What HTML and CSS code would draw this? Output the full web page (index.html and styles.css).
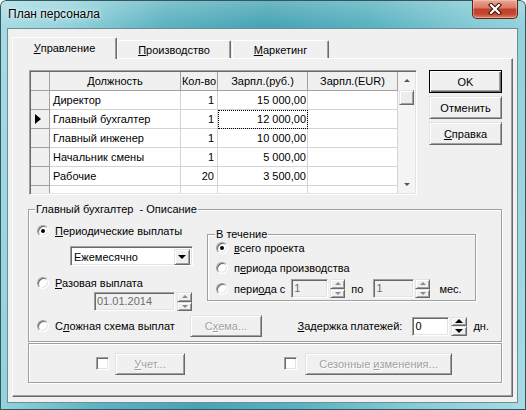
FILE: index.html
```html
<!DOCTYPE html>
<html lang="ru">
<head>
    <meta charset="UTF-8">
    <title>План персонала</title>
    <link rel="stylesheet" href="styles.css">
</head>
<body>
    <div class="window">
        <div class="titlebar">
            <span class="title">План персонала</span>
            <span class="close">
                <svg width="14" height="12" viewBox="0 0 14 12">
                    <path d="M3 2 L11 10 M11 2 L3 10" stroke="#3a130c" stroke-width="4.2" stroke-linecap="square"/>
                    <path d="M3 2 L11 10 M11 2 L3 10" stroke="#fff" stroke-width="2.2" stroke-linecap="square"/>
                </svg>
            </span>
        </div>

        <div class="client">
            <div class="tabs">
                <div class="tab active"><u>У</u>правление</div>
                <div class="tab prod"><u>П</u>роизводство</div>
                <div class="tab mark"><u>М</u>аркетинг</div>
            </div>

            <div class="panel">
                <div class="top">
                    <div class="grid">
                        <div class="grid-body">
                            <div class="row head">
                                <div class="c ind"></div>
                                <div class="c name">Должность</div>
                                <div class="c qty">Кол-во</div>
                                <div class="c rub">Зарпл.(руб.)</div>
                                <div class="c eur">Зарпл.(EUR)</div>
                            </div>
                            <div class="row">
                                <div class="c ind"></div>
                                <div class="c name">Директор</div>
                                <div class="c qty">1</div>
                                <div class="c rub">15 000,00</div>
                                <div class="c eur"></div>
                            </div>
                            <div class="row">
                                <div class="c ind"><span class="pointer"></span></div>
                                <div class="c name">Главный бухгалтер</div>
                                <div class="c qty">1</div>
                                <div class="c rub focus">12 000,00</div>
                                <div class="c eur"></div>
                            </div>
                            <div class="row">
                                <div class="c ind"></div>
                                <div class="c name">Главный инженер</div>
                                <div class="c qty">1</div>
                                <div class="c rub">10 000,00</div>
                                <div class="c eur"></div>
                            </div>
                            <div class="row">
                                <div class="c ind"></div>
                                <div class="c name">Начальник смены</div>
                                <div class="c qty">1</div>
                                <div class="c rub">5 000,00</div>
                                <div class="c eur"></div>
                            </div>
                            <div class="row">
                                <div class="c ind"></div>
                                <div class="c name">Рабочие</div>
                                <div class="c qty">20</div>
                                <div class="c rub">3 500,00</div>
                                <div class="c eur"></div>
                            </div>
                            <div class="row">
                                <div class="c ind"></div>
                                <div class="c name"></div>
                                <div class="c qty"></div>
                                <div class="c rub"></div>
                                <div class="c eur"></div>
                            </div>
                        </div>
                        <div class="vscroll">
                            <div class="sb-btn"><span class="tri up"></span></div>
                            <div class="sb-thumb"></div>
                            <div class="sb-track"></div>
                            <div class="sb-btn"><span class="tri down"></span></div>
                        </div>
                    </div>

                    <div class="cmds">
                        <button class="btn default">OK</button>
                        <button class="btn">Отменить</button>
                        <button class="btn"><u>С</u>правка</button>
                    </div>
                </div>

                <div class="group main">
                    <div class="gtitle">Главный бухгалтер&nbsp; - Описание</div>
                    <div class="main-top">
                        <div class="left-col">
                            <div class="opt first"><span class="radio on"></span><span><u>П</u>ериодические выплаты</span></div>
                            <div class="combo">
                                <span class="combo-text">Ежемесячно</span>
                                <span class="drop raised"><span class="tri down black"></span></span>
                            </div>
                            <div class="opt second"><span class="radio"></span><span><u>Р</u>азовая выплата</span></div>
                            <div class="date">
                                <span class="edit off date-edit">01.01.2014</span>
                                <span class="spin">
                                    <span class="raised"><span class="tri up"></span></span>
                                    <span class="raised"><span class="tri down"></span></span>
                                </span>
                            </div>
                        </div>

                        <div class="group period">
                            <div class="gtitle">В течение</div>
                            <div class="opt line"><span class="radio on"></span><span><u>в</u>сего проекта</span></div>
                            <div class="opt line"><span class="radio"></span><span>п<u>е</u>риода производства</span></div>
                            <div class="opt line last">
                                <span class="radio"></span><span>пери<u>о</u>да с</span>
                                <span class="edit off from">1</span>
                                <span class="spin">
                                    <span class="raised"><span class="tri up"></span></span>
                                    <span class="raised"><span class="tri down"></span></span>
                                </span>
                                <span class="po">по</span>
                                <span class="edit off to">1</span>
                                <span class="spin near">
                                    <span class="raised"><span class="tri up"></span></span>
                                    <span class="raised"><span class="tri down"></span></span>
                                </span>
                                <span class="unit">мес.</span>
                            </div>
                        </div>
                    </div>

                    <div class="bottom-row">
                        <div class="opt scheme-opt"><span class="radio"></span><span>С<u>л</u>ожная схема выплат</span></div>
                        <button class="btn off scheme">С<u>х</u>ема...</button>
                        <div class="delay">
                            <span><u>З</u>адержка платежей:</span>
                            <span class="edit days">0</span>
                            <span class="spin">
                                <span class="raised"><span class="tri up black"></span></span>
                                <span class="raised"><span class="tri down black"></span></span>
                            </span>
                            <span class="unit">дн.</span>
                        </div>
                    </div>
                </div>

                <div class="group extra">
                    <span class="check"></span>
                    <button class="btn off account"><u>У</u>чет...</button>
                    <span class="check second"></span>
                    <button class="btn off season">Сезонные <u>и</u>зменения...</button>
                </div>
            </div>
        </div>
    </div>
</body>
</html>
```

FILE: styles.css
```css
body {
    margin: 0;
    background: #fff;
    font-family: "Liberation Sans", Arial, sans-serif;
    font-size: 11px;
    color: #000;
}
u {
    text-decoration: underline;
    text-underline-offset: 1px;
}

/* window frame */
.window {
    width: 526px;
    height: 410px;
    box-sizing: border-box;
    display: flex;
    flex-direction: column;
    padding: 0 8px 7px 7px;
    border-radius: 6px 6px 0 0;
    box-shadow: inset 0 0 0 1px #36565f;
    background:
        linear-gradient(180deg, rgba(255,255,255,0.22), rgba(255,255,255,0) 26px),
        linear-gradient(100deg, #a9dce4 0%, #93d3dc 12%, #5db3c1 28%, #47a4b4 45%, #58b2c0 62%, #84cad5 80%, #a8dce4 100%);
}
.titlebar {
    height: 28px;
    display: flex;
    justify-content: space-between;
    align-items: flex-start;
}
.title {
    padding: 7px 0 0 1px;
    font-size: 12px;
    line-height: 15px;
    text-shadow: 0 0 6px rgba(255,255,255,0.9), 0 0 2px rgba(255,255,255,0.8);
}
.close {
    width: 46px;
    height: 19px;
    box-sizing: border-box;
    border: 1px solid #5d241a;
    border-top: none;
    border-radius: 0 0 5px 5px;
    background: linear-gradient(#eaa797, #d97b66 42%, #c2402b 52%, #c44530 78%, #dd8266);
    box-shadow: inset 0 0 0 1px rgba(255,210,200,0.45);
    display: flex;
    align-items: center;
    justify-content: center;
}

/* client area */
.client {
    flex: 1;
    display: flex;
    flex-direction: column;
    background: #f0f0f0;
    border: 1px solid #6f8d96;
    padding: 8px 4px 5px 4px;
}
.tabs {
    display: flex;
    align-items: flex-end;
    height: 21px;
}
.tab {
    box-sizing: border-box;
    height: 18px;
    border: 1px solid;
    border-color: #fff #696969 transparent #fff;
    border-bottom: none;
    border-radius: 2px 2px 0 0;
    box-shadow: inset -1px 0 #a0a0a0;
    background: #f0f0f0;
    display: flex;
    align-items: center;
    justify-content: center;
}
.tab.active {
    width: 105px;
    height: 22px;
    margin-bottom: -1px;
    padding-bottom: 1px;
    position: relative;
    z-index: 1;
}
.tab.prod {
    width: 114px;
}
.tab.mark {
    width: 97px;
    margin-left: 1px;
}
.panel {
    flex: 1;
    box-sizing: border-box;
    border: 1px solid;
    border-color: #fff #696969 #696969 #fff;
    box-shadow: inset -1px -1px #a0a0a0;
    padding: 11px 0 0 16px;
    display: flex;
    flex-direction: column;
}

/* grid */
.top {
    display: flex;
    gap: 12px;
    height: 125px;
}
.grid {
    width: 388px;
    height: 125px;
    box-sizing: border-box;
    border: 1px solid;
    border-color: #a0a0a0 #fff #fff #a0a0a0;
    box-shadow: inset 1px 1px #696969, inset -1px -1px #e3e3e3;
    padding: 1px;
    display: flex;
    background: #fff;
}
.grid-body {
    flex: 1;
    overflow: hidden;
}
.row {
    display: flex;
    height: 19px;
}
.c {
    box-sizing: border-box;
    height: 19px;
    border-right: 1px solid #d4d4d4;
    border-bottom: 1px solid #d4d4d4;
    padding: 0 3px;
    line-height: 18px;
    white-space: nowrap;
    overflow: hidden;
}
.ind {
    width: 19px;
    background: #f0f0f0;
    border-color: #a0a0a0;
    display: flex;
    align-items: center;
    padding-left: 4px;
}
.name {
    width: 131px;
}
.qty {
    width: 37px;
    text-align: right;
}
.rub {
    width: 90px;
    text-align: right;
    padding-right: 1px;
}
.eur {
    width: 90px;
}
.head .c {
    background: #f0f0f0;
    border-color: #a0a0a0;
    text-align: center;
    padding: 0;
}
.focus {
    outline: 1px dotted #000;
    outline-offset: -1px;
}
.pointer {
    border-left: 6px solid #000;
    border-top: 5px solid transparent;
    border-bottom: 5px solid transparent;
}
.vscroll {
    width: 17px;
    display: flex;
    flex-direction: column;
    background: #f4f4f4;
}
.sb-btn {
    height: 17px;
    display: flex;
    align-items: center;
    justify-content: center;
}
.sb-thumb {
    height: 15px;
    margin: 1px 1px 0 1px;
    box-sizing: border-box;
    border: 1px solid;
    border-color: #e3e3e3 #696969 #696969 #e3e3e3;
    box-shadow: inset 1px 1px #fff, inset -1px -1px #a0a0a0;
    background: #ececec;
}
.sb-track {
    flex: 1;
}
.tri {
    width: 0;
    height: 0;
    border-left: 3px solid transparent;
    border-right: 3px solid transparent;
}
.tri.up {
    border-bottom: 3px solid #8a8a8a;
}
.tri.down {
    border-top: 3px solid #8a8a8a;
}
.sb-btn .tri.up {
    border-bottom-color: #555;
}
.sb-btn .tri.down {
    border-top-color: #555;
}
.tri.black.up {
    border-bottom: 4px solid #000;
    border-left-width: 4px;
    border-right-width: 4px;
}
.tri.black.down {
    border-top: 4px solid #000;
    border-left-width: 4px;
    border-right-width: 4px;
}

/* buttons */
.cmds {
    display: flex;
    flex-direction: column;
    gap: 3px;
    width: 73px;
}
.btn {
    box-sizing: border-box;
    height: 23px;
    margin: 0;
    padding: 0;
    font: inherit;
    color: #000;
    background: #f0f0f0;
    border: 1px solid;
    border-color: #e3e3e3 #696969 #696969 #e3e3e3;
    box-shadow: inset 1px 1px #fff, inset -1px -1px #a0a0a0;
}
.btn.default {
    border-color: #000;
    box-shadow: inset 1px 1px #fff, inset -1px -1px #696969, inset -2px -2px #a0a0a0;
}
.btn.off {
    color: #a0a0a0;
    text-shadow: 1px 1px 0 #fff;
}
.raised {
    box-sizing: border-box;
    border: 1px solid;
    border-color: #e3e3e3 #696969 #696969 #e3e3e3;
    box-shadow: inset 1px 1px #fff, inset -1px -1px #a0a0a0;
    background: #f0f0f0;
    display: flex;
    align-items: center;
    justify-content: center;
}

/* group boxes */
.group {
    box-sizing: border-box;
    border: 1px solid #a0a0a0;
    box-shadow: inset 1px 1px #fff, 1px 1px #fff;
}
.gtitle {
    width: fit-content;
    height: 13px;
    line-height: 13px;
    margin: -7px 0 0 -2px;
    padding: 0 1px;
    background: #f0f0f0;
}
.main {
    width: 474px;
    height: 133px;
    margin: 14px 0 0 -1px;
    padding: 0 12px 0 8px;
}
.main-top {
    display: flex;
}
.left-col {
    width: 170px;
}
.opt {
    display: flex;
    align-items: center;
    height: 16px;
    white-space: nowrap;
}
.opt.first {
    margin-top: 7px;
}
.opt.second {
    margin-top: 9px;
}
.radio {
    width: 12px;
    height: 12px;
    flex: none;
    box-sizing: border-box;
    margin-right: 6px;
    border-radius: 50%;
    border: 1px solid;
    border-color: #a0a0a0 #fff #fff #a0a0a0;
    box-shadow: inset 1px 1px #696969, inset -1px -1px #e3e3e3;
    background: #fff;
    display: flex;
    align-items: center;
    justify-content: center;
}
.radio.on::after {
    content: "";
    width: 4px;
    height: 4px;
    border-radius: 50%;
    background: #000;
}
.edit {
    box-sizing: border-box;
    height: 19px;
    border: 1px solid;
    border-color: #a0a0a0 #fff #fff #a0a0a0;
    box-shadow: inset 1px 1px #696969, inset -1px -1px #e3e3e3;
    background: #fff;
    padding: 0 2px;
    line-height: 17px;
    white-space: nowrap;
}
.edit.off {
    background: #f0f0f0;
    color: #6d6d6d;
}
.combo {
    display: flex;
    width: 123px;
    height: 20px;
    margin: 7px 0 0 33px;
    box-sizing: border-box;
    border: 1px solid;
    border-color: #a0a0a0 #fff #fff #a0a0a0;
    box-shadow: inset 1px 1px #696969, inset -1px -1px #e3e3e3;
    background: #fff;
    padding: 2px;
}
.combo-text {
    flex: 1;
    padding-left: 1px;
    line-height: 16px;
}
.drop {
    width: 16px;
    height: 16px;
}
.date {
    display: flex;
    margin: 1px 0 0 57px;
}
.date-edit {
    width: 81px;
}
.spin {
    display: flex;
    flex-direction: column;
    width: 15px;
    height: 19px;
    margin-left: 2px;
}
.spin .raised {
    flex: 1;
}
.period {
    width: 269px;
    height: 67px;
    margin-top: 18px;
    padding: 0 0 0 8px;
}
.period .gtitle {
    margin: -7px 0 -3px -1px;
}
.opt.line {
    height: 20px;
}
.opt.last {
    height: 21px;
}
.from {
    width: 37px;
    margin-left: 6px;
}
.po {
    margin-left: 6px;
}
.to {
    width: 41px;
    margin-left: 10px;
}
.spin.near {
    margin-left: 1px;
}
.opt.last .unit {
    margin-left: 9px;
}
.bottom-row {
    display: flex;
    align-items: center;
    height: 22px;
    margin-top: 4px;
}
.scheme-opt {
    width: 153px;
}
.scheme {
    width: 72px;
    height: 22px;
}
.delay {
    display: flex;
    align-items: center;
    margin-left: auto;
    white-space: nowrap;
}
.days {
    width: 37px;
    margin-left: 10px;
}
.delay .spin {
    width: 16px;
}
.delay .unit {
    margin-left: 6px;
}
.extra {
    width: 474px;
    height: 40px;
    margin: 1px 0 0 -1px;
    padding: 9px 0 0 67px;
    display: flex;
    align-items: flex-start;
}
.check {
    width: 13px;
    height: 13px;
    flex: none;
    box-sizing: border-box;
    margin-top: 4px;
    border: 1px solid;
    border-color: #a0a0a0 #fff #fff #a0a0a0;
    box-shadow: inset 1px 1px #696969, inset -1px -1px #e3e3e3;
    background: #fff;
}
.check.second {
    margin-left: 99px;
}
.account {
    width: 70px;
    height: 22px;
    margin-left: 6px;
}
.season {
    width: 147px;
    height: 22px;
    margin-left: 8px;
}
```
